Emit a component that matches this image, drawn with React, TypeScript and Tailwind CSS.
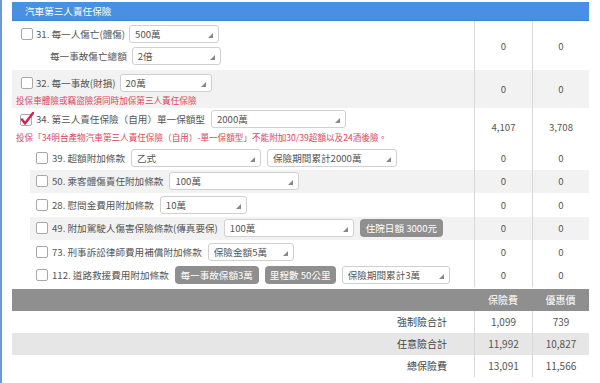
import type { ReactElement, ReactNode } from "react";

interface Item {
	kind: "select" | "button";
	text: string;
	width: string;
}

interface SubRow {
	label: string;
	items: Item[];
	alt: boolean;
	fee: string;
	disc: string;
}

const SUB_ROWS: SubRow[] = [
	{
		label: "39. 超額附加條款",
		items: [
			{ kind: "select", text: "乙式", width: "w-[130px]" },
			{ kind: "select", text: "保險期間累計2000萬", width: "w-[130px]" },
		],
		alt: false,
		fee: "0",
		disc: "0",
	},
	{
		label: "50. 乘客體傷責任附加條款",
		items: [{ kind: "select", text: "100萬", width: "w-[130px]" }],
		alt: true,
		fee: "0",
		disc: "0",
	},
	{
		label: "28. 慰問金費用附加條款",
		items: [{ kind: "select", text: "10萬", width: "w-[87px]" }],
		alt: false,
		fee: "0",
		disc: "0",
	},
	{
		label: "49. 附加駕駛人傷害保險條款(傳真要保)",
		items: [
			{ kind: "select", text: "100萬", width: "w-[130px]" },
			{ kind: "button", text: "住院日額 3000元", width: "w-[83px]" },
		],
		alt: true,
		fee: "0",
		disc: "0",
	},
	{
		label: "73. 刑事訴訟律師費用補償附加條款",
		items: [{ kind: "select", text: "保險金額5萬", width: "w-[86px]" }],
		alt: false,
		fee: "0",
		disc: "0",
	},
	{
		label: "112. 道路救援費用附加條款",
		items: [
			{ kind: "button", text: "每一事故保額3萬", width: "w-[84px]" },
			{ kind: "button", text: "里程數 50公里", width: "w-[71px]" },
			{ kind: "select", text: "保險期間累計3萬", width: "w-[108px]" },
		],
		alt: false,
		fee: "0",
		disc: "0",
	},
];

const SUMMARY = [
	{ label: "強制險合計", fee: "1,099", disc: "739", alt: false },
	{ label: "任意險合計", fee: "11,992", disc: "10,827", alt: true },
	{ label: "總保險費", fee: "13,091", disc: "11,566", alt: false },
];

function Select({ text, width }: { text: string; width: string }): ReactElement {
	return (
		<div
			className={`relative flex h-[18px] shrink-0 items-center rounded-[3px] border border-[#d0d0d0] bg-white pl-[5px] text-[#555] ${width}`}
		>
			<span className="whitespace-nowrap leading-[14px]">{text}</span>
			<svg className="absolute bottom-[4px] right-[5px]" width="5" height="5" viewBox="0 0 5 5">
				<polygon points="5,0 5,5 0,5" fill="#888" />
			</svg>
		</div>
	);
}

function GrayButton({ text, width }: { text: string; width: string }): ReactElement {
	return (
		<div
			className={`flex h-[18px] shrink-0 items-center justify-center whitespace-nowrap rounded-[4px] bg-[#8f8f8f] leading-[14px] text-white ${width}`}
		>
			{text}
		</div>
	);
}

function Checkbox({ checked = false }: { checked?: boolean }): ReactElement {
	if (checked) {
		return (
			<svg width="14" height="14" viewBox="0 0 14 14" className="shrink-0">
				<rect x="0.5" y="2.5" width="11" height="11" rx="1.5" fill="#fff" stroke="#aaa" />
				<path d="M2 7.5 L5 11.5 L13 1" fill="none" stroke="#d81f4f" strokeWidth="2.4" strokeLinecap="round" strokeLinejoin="round" />
			</svg>
		);
	}
	return <span className="h-[12px] w-[12px] shrink-0 rounded-[2px] border border-[#a8a8a8] bg-white" />;
}

function PriceCells({ fee, disc, alt }: { fee: string; disc: string; alt?: boolean }): ReactElement {
	return (
		<>
			<div
				className={`flex w-[58px] shrink-0 items-center justify-center border-l border-[#d9d9d9] ${alt ? "bg-[#f2f2f2]" : ""}`}
			>
				{fee}
			</div>
			<div
				className={`flex w-[57px] shrink-0 items-center justify-center border-l border-[#d9d9d9] ${alt ? "bg-[#f2f2f2]" : ""}`}
			>
				{disc}
			</div>
		</>
	);
}

function Row({ children, alt, fee, disc, className }: { children: ReactNode; alt?: boolean; fee: string; disc: string; className: string }): ReactElement {
	return (
		<div className={`flex ${className}`}>
			<div className={`flex flex-1 flex-col ${alt ? "bg-[#f2f2f2]" : ""}`}>{children}</div>
			<PriceCells fee={fee} disc={disc} alt={alt} />
		</div>
	);
}

export default function App(): ReactElement {
	return (
		<div className="h-[383px] w-[600px] overflow-hidden border-l-2 border-[#6d9bd1] bg-white font-['Noto_Sans_CJK_TC','Noto_Sans',sans-serif] text-[9.6px] leading-[14px] text-[#555]">
			<div className="ml-[10px] w-[577px] pt-[2px]">
				{/* 標題 */}
				<div className="flex h-[19px] items-center border-b border-[#3f7fd0] bg-[#4a90e2] pl-[13px] text-white">
					汽車第三人責任保險
				</div>

				{/* 31 */}
				<Row fee="0" disc="0" className="h-[49px]">
					<div className="flex flex-col gap-[4px] pl-[9px] pt-[4px]">
						<div className="flex h-[18px] items-center">
							<Checkbox />
							<span className="ml-[3px]">31. 每一人傷亡(體傷)</span>
							<div className="ml-[4px]">
								<Select text="500萬" width="w-[90px]" />
							</div>
						</div>
						<div className="flex h-[18px] items-center pl-[29px]">
							<span>每一事故傷亡總額</span>
							<div className="ml-[5px]">
								<Select text="2倍" width="w-[89px]" />
							</div>
						</div>
					</div>
				</Row>

				{/* 32 */}
				<Row fee="0" disc="0" alt className="h-[38px]">
					<div className="mt-[4px] flex h-[18px] items-center pl-[9px]">
						<Checkbox />
						<span className="ml-[3px]">32. 每一事故(財損)</span>
						<div className="ml-[4px]">
							<Select text="20萬" width="w-[92px]" />
						</div>
					</div>
					<div className="mt-[2px] flex h-[11px] items-center whitespace-nowrap pl-[4px] text-[8.6px] text-[#e0435c]">
						投保車體險或竊盜險須同時加保第三人責任保險
					</div>
				</Row>

				{/* 34 */}
				<Row fee="4,107" disc="3,708" className="h-[38px]">
					<div className="mt-[2px] flex h-[18px] items-center pl-[8px]">
						<Checkbox checked />
						<span className="ml-[2px]">34. 第三人責任保險（自用）單一保額型</span>
						<div className="ml-[6px]">
							<Select text="2000萬" width="w-[135px]" />
						</div>
					</div>
					<div className="mt-[3px] flex h-[11px] items-center whitespace-nowrap pl-[4px] text-[8.6px] text-[#e0435c]">
						投保「34明台產物汽車第三人責任保險（自用）-單一保額型」不能附加30/39超額以及24酒後險。
					</div>
				</Row>

				{/* 附加條款 */}
				{SUB_ROWS.map((r) => (
					<div key={r.label} className="flex h-[23.5px]">
						<div className="flex flex-1 pl-[18px]">
							<div className={`flex flex-1 items-center gap-[6px] pl-[6px] ${r.alt ? "bg-[#f2f2f2]" : ""}`}>
								<div className="flex items-center gap-[4px]">
									<Checkbox />
									<span className="whitespace-nowrap">{r.label}</span>
								</div>
								{r.items.map((it) =>
									it.kind === "select" ? (
										<Select key={it.text} text={it.text} width={it.width} />
									) : (
										<GrayButton key={it.text} text={it.text} width={it.width} />
									),
								)}
							</div>
						</div>
						<PriceCells fee={r.fee} disc={r.disc} alt={r.alt} />
					</div>
				))}

				{/* 合計 */}
				<div className="mt-[2px] flex h-[22px] items-center bg-[#8f8f8f] text-[10px] text-white">
					<div className="flex-1" />
					<div className="w-[58px] text-center">保險費</div>
					<div className="w-[57px] text-center">優惠價</div>
				</div>
				{SUMMARY.map((s) => (
					<div key={s.label} className={`flex h-[22px] text-[10px] ${s.alt ? "bg-[#e6e6e6]" : ""}`}>
						<div className="flex flex-1 items-center justify-end pr-[27px] text-[#444]">{s.label}</div>
						<div className="flex w-[58px] items-center justify-center border-l border-[#d9d9d9]">{s.fee}</div>
						<div className="flex w-[57px] items-center justify-center border-l border-[#d9d9d9]">{s.disc}</div>
					</div>
				))}
			</div>
		</div>
	);
}
